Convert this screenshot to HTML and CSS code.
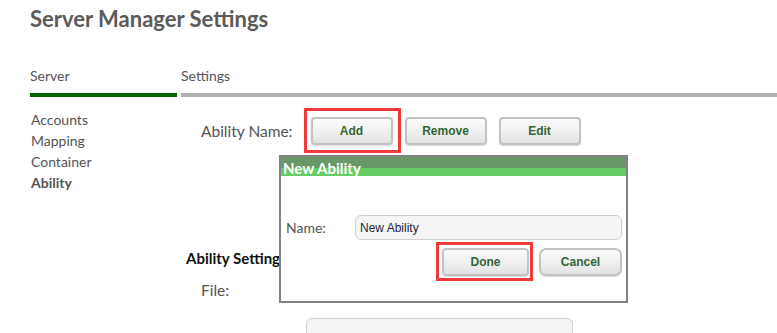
FILE: index.html
```html
<!DOCTYPE html>
<html lang="en">
<head>
    <meta charset="UTF-8">
    <meta name="viewport" content="width=device-width, initial-scale=1.0">
    <title>Server Manager Settings</title>
    <link rel="stylesheet" href="styles.css">
</head>
<body>
    <h1 class="title">Server Manager Settings</h1>

    <div class="tabs">
        <div class="tab active">Server</div>
        <div class="tab">Settings</div>
    </div>

    <div class="layout">
        <ul class="sidenav">
            <li>Accounts</li>
            <li>Mapping</li>
            <li>Container</li>
            <li class="current">Ability</li>
        </ul>

        <div class="main">
            <div class="ability-row">
                <span class="label">Ability Name:</span>
                <span class="highlight add-mark"><button class="btn">Add</button></span>
                <button class="btn">Remove</button>
                <button class="btn">Edit</button>
            </div>

            <h3 class="section-title">Ability Settings</h3>
            <div class="file-row"><span class="label">File:</span></div>
            <div class="file-box"></div>
        </div>
    </div>

    <div class="modal">
        <div class="modal-title">New Ability</div>
        <div class="modal-body">
            <div class="name-row">
                <label for="ability-name">Name:</label>
                <input type="text" id="ability-name" value="New Ability">
            </div>
            <div class="modal-actions">
                <span class="highlight done-mark"><button class="btn btn-done">Done</button></span>
                <button class="btn btn-cancel">Cancel</button>
            </div>
        </div>
    </div>
</body>
</html>
```

FILE: styles.css
```css
body {
    font-family: Lato, "Open Sans", sans-serif;
    color: #555;
    background: white;
    margin: 0;
    padding: 0;
}
.title {
    margin: 0;
    padding: 5px 0 0 30px;
    font-size: 22px;
    line-height: 27px;
    font-weight: bold;
    color: #5b5b5b;
}
.tabs {
    display: flex;
    gap: 4px;
    margin-top: 35px;
    padding-left: 30px;
}
.tab {
    font-size: 14px;
    line-height: 18px;
    padding-bottom: 8px;
    border-bottom: 4px solid #b0b0b0;
    flex: 1;
}
.tab.active {
    flex: none;
    width: 147px;
    border-bottom-color: #006600;
}
.layout {
    display: flex;
}
.sidenav {
    list-style: none;
    margin: 0;
    padding: 12px 0 0 31px;
    width: 150px;
    font-size: 14px;
    line-height: 21px;
}
.sidenav .current {
    font-weight: bold;
}
.main {
    flex: 1;
    padding-left: 5px;
}
.ability-row {
    display: flex;
    align-items: center;
    gap: 12px;
    margin-top: 11px;
    padding-left: 15px;
}
.label {
    font-size: 15.5px;
}
.ability-row .label {
    margin-right: -1px;
}
.highlight {
    display: inline-flex;
    border: 3px solid #f03a3a;
}
.add-mark {
    padding: 6px 5px 5px 4px;
    margin-right: -8px;
}
.btn {
    font-family: "Liberation Sans", Arial, sans-serif;
    font-size: 12px;
    font-weight: bold;
    color: #336633;
    background: linear-gradient(#fbfbfb, #f0f0f0 50%, #e2e2e2);
    border: 2px solid #c2c2c2;
    border-radius: 4px;
    box-shadow: 0 1px 1px rgba(0, 0, 0, 0.15);
    width: 82px;
    height: 28px;
    padding: 0;
}
.section-title {
    margin: 95px 0 0 0;
    font-size: 15px;
    line-height: 20px;
    color: #111;
}
.file-row {
    margin-top: 12px;
    padding-left: 15px;
    line-height: 20px;
}
.file-box {
    margin: 18px 0 0 120px;
    width: 265px;
    height: 26px;
    background: #f4f4f4;
    border: 1px solid #d0d0d0;
    border-radius: 6px;
}
.modal {
    position: absolute;
    left: 279px;
    top: 155px;
    width: 345px;
    height: 144px;
    background: white;
    border: 2px solid #828282;
}
.modal-title {
    height: 16px;
    padding: 3px 0 0 2px;
    background: linear-gradient(#689868 0, #689868 11px, #66cc66 11px);
    color: white;
    font-size: 15px;
    line-height: 16px;
    font-weight: bold;
}
.modal-body {
    padding: 39px 4px 0 5px;
}
.name-row {
    display: flex;
    align-items: center;
}
.name-row label {
    width: 69px;
    font-size: 14px;
}
.name-row input {
    width: 257px;
    height: 23px;
    padding: 0 4px;
    font-family: "Liberation Sans", Arial, sans-serif;
    font-size: 12px;
    color: #2a1f40;
    background: #f5f5f5;
    border: 1px solid #cfcfcf;
    border-radius: 6px;
}
.modal-actions {
    display: flex;
    justify-content: flex-end;
    align-items: flex-start;
    gap: 6px;
    margin-top: 2px;
}
.done-mark {
    padding: 3px 1px 2px 3px;
}
.btn-done {
    width: 87px;
}
.btn-cancel {
    width: 83px;
    margin-top: 6px;
    border-radius: 7px;
}
```
